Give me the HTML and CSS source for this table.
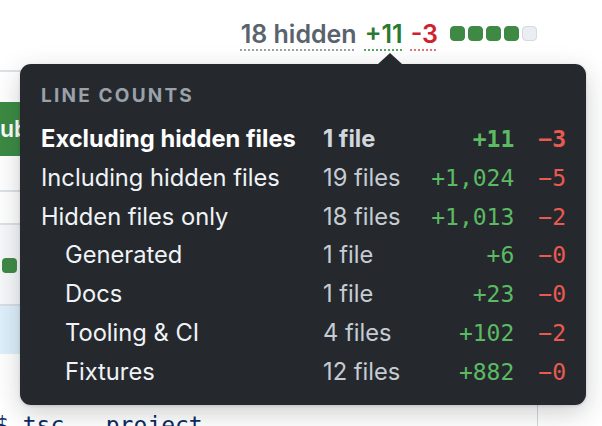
FILE: index.html
```html
<!DOCTYPE html>
<html lang="en">
<head>
<meta charset="utf-8">
<title>Line counts</title>
<link rel="stylesheet" href="styles.css">
</head>
<body>
<div class="page">
  <header class="stats">
    <span class="stat stat-hidden">18 hidden</span>
    <span class="stat stat-add">+11</span>
    <span class="stat stat-del">-3</span>
    <span class="diffbar">
      <i class="sq sq-on"></i><i class="sq sq-on"></i><i class="sq sq-on"></i><i class="sq sq-on"></i><i class="sq"></i>
    </span>
  </header>

  <div class="tip" role="tooltip">
    <div class="tip-title">Line counts</div>
    <div class="counts">
      <span class="lbl strong">Excluding hidden files</span><span class="files strong">1 file</span><span class="plus strong">+11</span><span class="minus strong">−3</span>
      <span class="lbl">Including hidden files</span><span class="files">19 files</span><span class="plus">+1,024</span><span class="minus">−5</span>
      <span class="lbl">Hidden files only</span><span class="files">18 files</span><span class="plus">+1,013</span><span class="minus">−2</span>
      <span class="lbl sub">Generated</span><span class="files">1 file</span><span class="plus">+6</span><span class="minus">−0</span>
      <span class="lbl sub">Docs</span><span class="files">1 file</span><span class="plus">+23</span><span class="minus">−0</span>
      <span class="lbl sub">Tooling &amp; CI</span><span class="files">4 files</span><span class="plus">+102</span><span class="minus">−2</span>
      <span class="lbl sub">Fixtures</span><span class="files">12 files</span><span class="plus">+882</span><span class="minus">−0</span>
    </div>
  </div>

  <section class="panel">
    <div class="toolbar"><button class="btn">Submit review</button></div>
    <div class="rule-row"></div>
    <div class="file-head"><span class="mini"></span></div>
    <div class="hl-row"></div>
    <div class="code-row"><code class="code">$ tsc --project</code></div>
  </section>
</div>
</body>
</html>
```

FILE: styles.css
```css
html, body {
  margin: 0;
  padding: 0;
  background: #ffffff;
  overflow: hidden;
}

body {
  width: 602px;
  height: 426px;
  font-family: Inter, "Noto Sans", "Liberation Sans", sans-serif;
}

.page {
  position: relative;
  width: 602px;
  height: 426px;
}

/* ---- header stats ---- */
.stats {
  box-sizing: border-box;
  height: 64px;
  padding: 18px 65px 0 0;
  display: flex;
  justify-content: flex-end;
  align-items: flex-start;
  font-size: 25px;
  line-height: 32px;
  font-weight: 600;
}

.stat {
  text-decoration-line: underline;
  text-decoration-style: dotted;
  text-decoration-thickness: 2px;
  text-underline-offset: 6px;
}

.stat-hidden {
  color: #59636e;
  text-decoration-color: #9aa1a9;
}

.stat-add {
  margin-left: 8px;
  color: #2b7a33;
  text-decoration-color: #5aa564;
}

.stat-del {
  margin-left: 8px;
  color: #cf222e;
  text-decoration-color: #e0767c;
}

.diffbar {
  display: flex;
  gap: 3px;
  margin-left: 12px;
  margin-top: 8px;
}

.sq {
  display: block;
  box-sizing: border-box;
  width: 15px;
  height: 15px;
  border-radius: 4px;
  background: #eaeef2;
  border: 1px solid #d4dae0;
}

.sq-on {
  background: #3e8a45;
  border-color: #3e8a45;
}

/* ---- tooltip ---- */
.tip {
  position: absolute;
  left: 20px;
  top: 64px;
  z-index: 5;
  box-sizing: border-box;
  width: 566px;
  height: 341px;
  padding: 20px 20px 0 21px;
  background: #25292e;
  border-radius: 11px;
  box-shadow: 0 8px 26px rgba(31, 35, 40, 0.22), 0 1px 3px rgba(31, 35, 40, 0.15);
  color: #f0f3f6;
}

.tip::before {
  content: "";
  position: absolute;
  left: 358px;
  top: -11px;
  border-left: 12px solid transparent;
  border-right: 12px solid transparent;
  border-bottom: 11px solid #25292e;
}

.tip-title {
  font-size: 19px;
  line-height: 24px;
  font-weight: 700;
  letter-spacing: 2.2px;
  text-transform: uppercase;
  color: #9aa1a9;
}

.counts {
  margin-top: 12px;
  display: grid;
  grid-template-columns: 282px 1fr auto auto;
  font-size: 23.7px;
  line-height: 38.8px;
}

.lbl {
  color: #f0f3f6;
  white-space: nowrap;
}

.lbl.sub {
  padding-left: 24px;
}

.files {
  color: #c6ccd3;
  white-space: nowrap;
}

.plus, .minus {
  font-family: "DejaVu Sans Mono", "Liberation Mono", monospace;
  font-size: 23px;
  text-align: right;
  white-space: nowrap;
}

.plus {
  color: #5bba62;
}

.minus {
  color: #ea5a50;
  padding-left: 24px;
}

.strong {
  font-weight: 700;
}

.lbl.strong {
  color: #ffffff;
}

.files.strong {
  color: #d2d7dd;
}

/* ---- background panel ---- */
.panel {
  box-sizing: border-box;
  width: 538px;
  margin-top: 6px;
  border-top: 2px solid #dde2e7;
  border-right: 1px solid #d0d7de;
  height: 356px;
}

.toolbar {
  box-sizing: border-box;
  height: 120px;
  padding-top: 30px;
  border-bottom: 2px solid #dde2e7;
}

.btn {
  display: block;
  margin-left: -31px;
  height: 54px;
  padding: 0 16px;
  border: none;
  border-radius: 8px;
  background: #3c8a43;
  color: #ffffff;
  font-family: Inter, "Noto Sans", sans-serif;
  font-size: 23px;
  font-weight: 600;
}

.rule-row {
  height: 31px;
  border-bottom: 2px solid #dde2e7;
}

.file-head {
  box-sizing: border-box;
  height: 81px;
  padding-top: 33px;
  background: #f6f8fa;
  border-bottom: 2px solid #d8dee4;
}

.mini {
  display: block;
  margin-left: 2px;
  width: 15px;
  height: 15px;
  border-radius: 4px;
  background: #3e8a45;
}

.hl-row {
  height: 48px;
  background: #ddf0fb;
}

.code-row {
  padding-top: 56px;
}

.code {
  display: block;
  margin-left: -5px;
  font-family: "DejaVu Sans Mono", "Liberation Mono", monospace;
  font-size: 23px;
  line-height: 30px;
  color: #0b2b63;
  white-space: pre;
}
```
